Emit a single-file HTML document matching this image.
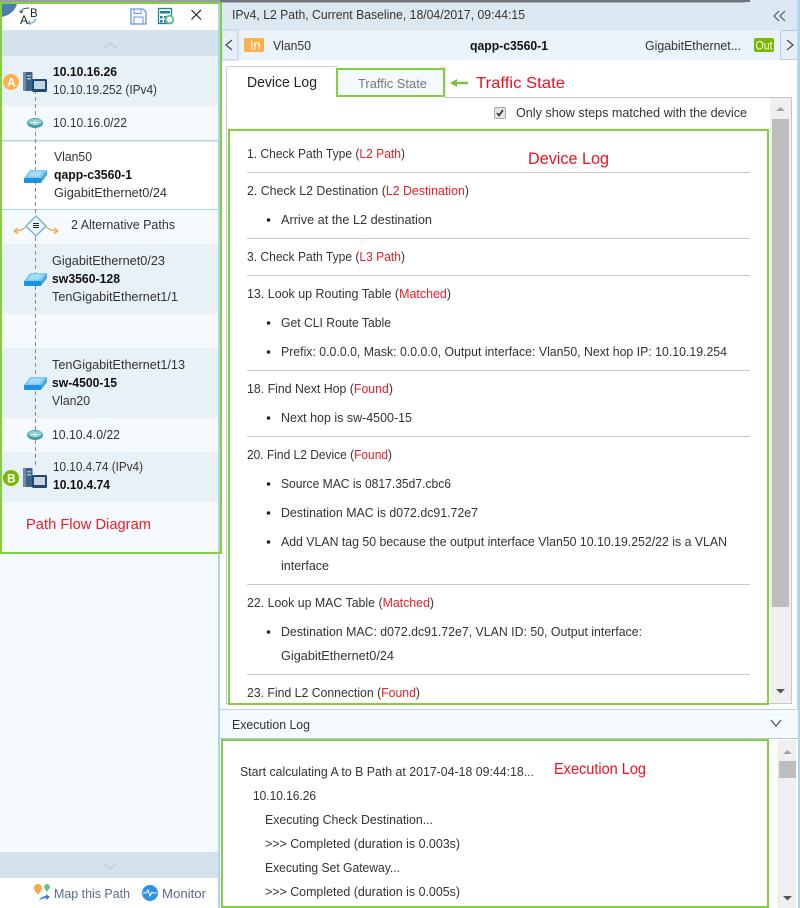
<!DOCTYPE html>
<html><head><meta charset="utf-8"><style>
html,body{margin:0;padding:0;background:#fff;width:800px;height:908px;overflow:hidden}
svg{display:block}
text{font-family:"Liberation Sans",sans-serif;font-size:13.3px;fill:#333}
.b{font-weight:bold;fill:#111}
.r{fill:#ee1c25}
.a{font-size:16px;fill:#f01020}
</style></head><body>
<svg width="800" height="908" viewBox="0 0 800 908" xmlns="http://www.w3.org/2000/svg">
<defs>
<g id="srv"><rect x="0" y="0" width="9.500" height="19" rx="1" fill="#3d6285"/><rect x="0" y="0" width="3" height="19" fill="#6d8cab"/><rect x="4" y="3" width="4" height="1.500" fill="#a6bccf"/><rect x="4" y="6" width="4" height="1.500" fill="#a6bccf"/><rect x="9" y="7" width="15" height="13" rx="1.500" fill="#1f4a72"/><rect x="11" y="9" width="11" height="8" fill="#c7d3dd"/></g>
<g id="sw"><path d="M6 0H23L17 8H0Z" fill="#86c9ef"/><path d="M7 1.500H19L15 6.500H4Z" fill="#a6dbf6"/><path d="M0 8H17V13H1Q0 13 0 12Z" fill="#1d92dc"/><path d="M17 8L23 0V5L17 13Z" fill="#42a8e4"/></g>
<g id="net"><ellipse cx="8" cy="5" rx="8" ry="5" fill="#3f9aa3"/><ellipse cx="8" cy="4" rx="7" ry="3.300" fill="#86cbcf"/><path d="M4 4.500H12M8 2.500V6.500" stroke="#fff" stroke-width="1"/></g>
</defs>

<!-- LEFT PANEL -->
<rect x="0" y="0" width="220" height="908" fill="#fff"/>
<rect x="2" y="30" width="216" height="26" fill="#d4e2ee"/>
<path d="M103 48l7-5 7 5" fill="none" stroke="#c4d3de" stroke-width="2"/>
<rect x="2" y="56" width="216" height="50" fill="#e9f1f8"/>
<rect x="2" y="106" width="216" height="34" fill="#f5fafe"/>
<rect x="2" y="140" width="216" height="1.500" fill="#add5ea"/>
<rect x="2" y="209" width="216" height="1.500" fill="#add5ea"/>
<rect x="2" y="210" width="216" height="34" fill="#f5fafe"/>
<rect x="2" y="244" width="216" height="70" fill="#e9f1f8"/>
<rect x="2" y="314" width="216" height="34" fill="#f5fafe"/>
<rect x="2" y="348" width="216" height="70" fill="#e9f1f8"/>
<rect x="2" y="418" width="216" height="34" fill="#f5fafe"/>
<rect x="2" y="452" width="216" height="50" fill="#e9f1f8"/>
<rect x="0" y="502" width="218" height="350" fill="#f5fafe"/>
<rect x="0" y="852" width="218" height="26" fill="#d4e2ee"/>
<path d="M103 863l7 6 7-6" fill="none" stroke="#c4d3de" stroke-width="2"/>
<rect x="218" y="0" width="2" height="908" fill="#add5ea"/>

<!-- dashed path -->
<line x1="35.500" y1="90" x2="35.500" y2="468" stroke="#888" stroke-width="1" stroke-dasharray="4 3"/>

<!-- top icons -->
<path d="M2 4H17Q14 14 2 17Z" fill="#4b7fae"/>
<text x="20" y="24" style="font-size:12px;fill:#222">A</text>
<text x="30" y="17" style="font-size:11.500px;fill:#222">B</text>
<path d="M21 13 Q21 8 29 8M21 13l-1.500-2.500M21 13l2-2" fill="none" stroke="#444" stroke-width=".9"/>
<path d="M28 23 Q34 24 36 19M28 23l2.500 1.500M28 23l2-2" fill="none" stroke="#2b84c8" stroke-width=".9"/>
<path d="M131 9h12l3 3v12h-15z" fill="#fff" stroke="#5f93f0" stroke-width="1.300"/>
<rect x="134" y="9" width="7" height="4.500" fill="none" stroke="#5f93f0"/>
<rect x="134" y="17" width="9" height="7" fill="none" stroke="#5f93f0"/>
<rect x="158.500" y="8.500" width="13" height="15" fill="#fff" stroke="#1d7fa6" stroke-width="1.300"/>
<rect x="160" y="11" width="10" height="2.500" fill="#1d7fa6"/>
<rect x="160" y="16" width="2.500" height="2.500" fill="#1d7fa6"/><rect x="164" y="16" width="2.500" height="2.500" fill="#1d7fa6"/>
<rect x="160" y="20" width="2.500" height="2.500" fill="#1d7fa6"/><rect x="164" y="20" width="2.500" height="2.500" fill="#1d7fa6"/>
<circle cx="169.500" cy="19.500" r="3.800" fill="#fff" stroke="#5cc08a" stroke-width="1.800"/>
<path d="M191.500 10l9.500 9.500M201 10l-9.500 9.500" stroke="#222" stroke-width="1.200"/>

<!-- nodes -->
<circle cx="11" cy="82" r="8" fill="#fbb04e"/><text x="7" y="86.500" style="font-size:12px;font-weight:bold;fill:#fff">A</text>
<use href="#srv" x="23" y="72"/>
<text x="53" y="76" class="b" textLength="64" lengthAdjust="spacingAndGlyphs">10.10.16.26</text>
<text x="53" y="94" textLength="104" lengthAdjust="spacingAndGlyphs">10.10.19.252 (IPv4)</text>
<use href="#net" x="27" y="118"/>
<text x="53" y="127" textLength="74" lengthAdjust="spacingAndGlyphs">10.10.16.0/22</text>
<use href="#sw" x="24" y="170"/>
<text x="54" y="161" textLength="38" lengthAdjust="spacingAndGlyphs">Vlan50</text>
<text x="54" y="179" class="b" textLength="78" lengthAdjust="spacingAndGlyphs">qapp-c3560-1</text>
<text x="54" y="197" textLength="113" lengthAdjust="spacingAndGlyphs">GigabitEthernet0/24</text>

<path d="M36 216l10 10-10 10-10-10z" fill="#eaf4fb" stroke="#7fb5d8" stroke-width="1.500"/>
<path d="M33 223.500h6M33 225.500h6M33 227.500h6" stroke="#222" stroke-width="1"/>
<path d="M14 231Q21 231 26 227M14 231l4-3M14 231l4 2.500M58 231Q51 231 46 227M58 231l-4-3M58 231l-4 2.500" fill="none" stroke="#f5a94a" stroke-width="1.400"/>
<text x="71" y="229" textLength="104" lengthAdjust="spacingAndGlyphs">2 Alternative Paths</text>

<use href="#sw" x="24" y="273"/>
<text x="52" y="265" textLength="113" lengthAdjust="spacingAndGlyphs">GigabitEthernet0/23</text>
<text x="52" y="283" class="b" textLength="68" lengthAdjust="spacingAndGlyphs">sw3560-128</text>
<text x="52" y="301" textLength="126" lengthAdjust="spacingAndGlyphs">TenGigabitEthernet1/1</text>

<use href="#sw" x="24" y="377"/>
<text x="52" y="369" textLength="133" lengthAdjust="spacingAndGlyphs">TenGigabitEthernet1/13</text>
<text x="52" y="387" class="b" textLength="65" lengthAdjust="spacingAndGlyphs">sw-4500-15</text>
<text x="52" y="405" textLength="38" lengthAdjust="spacingAndGlyphs">Vlan20</text>

<use href="#net" x="27" y="430"/>
<text x="52" y="439" textLength="68" lengthAdjust="spacingAndGlyphs">10.10.4.0/22</text>

<circle cx="11" cy="478" r="8" fill="#7ab800"/><text x="7" y="482.500" style="font-size:12px;font-weight:bold;fill:#fff">B</text>
<use href="#srv" x="23" y="468"/>
<text x="53" y="471" textLength="90" lengthAdjust="spacingAndGlyphs">10.10.4.74 (IPv4)</text>
<text x="53" y="489" class="b" textLength="57" lengthAdjust="spacingAndGlyphs">10.10.4.74</text>
<text x="26" y="529" class="r" style="font-size:14.500px" textLength="125" lengthAdjust="spacingAndGlyphs">Path Flow Diagram</text>

<!-- bottom links -->
<path d="M38 895c-3-4-4-5-4-7a4 4 0 0 1 8 0c0 2-1 3-4 7z" fill="#f5a94a"/>
<path d="M47 892c-2-3-3-4-3-5a3 3 0 0 1 6 0c0 1-1 2-3 5z" fill="#6cc27a"/>
<path d="M39 901q2-5 7-5v-2l4 3-4 3v-2q-4 0-7 3z" fill="#3d7ee0"/>
<text x="54" y="898" style="fill:#5a6a8a" textLength="76" lengthAdjust="spacingAndGlyphs">Map this Path</text>
<circle cx="150" cy="893" r="8" fill="#2c92e8"/>
<path d="M143 893h3l2-3 2 6 2-4 1 1h4" fill="none" stroke="#fff" stroke-width="1"/>
<text x="162" y="898" style="fill:#5a6a8a" textLength="44" lengthAdjust="spacingAndGlyphs">Monitor</text>

<!-- RIGHT PANEL -->
<rect x="222" y="0" width="576" height="30" fill="#dbe8f1"/>
<rect x="220" y="0" width="530" height="2" fill="#6d7378"/>
<rect x="220" y="2" width="525" height="1" fill="#a8b3bb"/>
<text x="232" y="19" textLength="293" lengthAdjust="spacingAndGlyphs">IPv4, L2 Path, Current Baseline, 18/04/2017, 09:44:15</text>
<path d="M779 11l-5 5 5 5M785 11l-5 5 5 5" fill="none" stroke="#555" stroke-width="1.200"/>

<rect x="222" y="30" width="576" height="30" fill="#eaf3fa"/>
<rect x="222" y="30" width="16" height="30" fill="#e6eff7" stroke="#b7cde4"/>
<path d="M232 40l-6 5 6 5" fill="none" stroke="#444" stroke-width="1.200"/>
<rect x="780.500" y="30.500" width="17" height="29" fill="#e6eff7" stroke="#b7cde4"/>
<path d="M787 40l6 5-6 5" fill="none" stroke="#444" stroke-width="1.200"/>
<rect x="244" y="38" width="20" height="14" rx="2" fill="#fbb04e"/>
<text x="250" y="49.500" style="font-size:12.500px;fill:#fff">In</text>
<text x="273" y="50" textLength="38" lengthAdjust="spacingAndGlyphs">Vlan50</text>
<text x="470" y="50" class="b" textLength="78" lengthAdjust="spacingAndGlyphs">qapp-c3560-1</text>
<text x="645" y="50" textLength="96" lengthAdjust="spacingAndGlyphs">GigabitEthernet...</text>
<rect x="754" y="38" width="20" height="14" rx="2" fill="#7ab800"/>
<text x="755.500" y="49.500" style="font-size:12px;fill:#fff" textLength="17" lengthAdjust="spacingAndGlyphs">Out</text>

<!-- tabs -->
<path d="M226.500 97V69q0-2.500 2.500-2.500H337" fill="none" stroke="#ccc"/>
<path d="M440 67h5v30" fill="none" stroke="#ccc"/>
<rect x="337" y="69" width="107" height="27" fill="#f5fafe" stroke="#83cf3f" stroke-width="2"/>
<text x="247" y="87" style="font-size:14.500px;fill:#222" textLength="70" lengthAdjust="spacingAndGlyphs">Device Log</text>
<text x="358" y="88" style="fill:#777" textLength="69" lengthAdjust="spacingAndGlyphs">Traffic State</text>
<path d="M453 83h15" stroke="#7ac143" stroke-width="2.500"/><path d="M450 83l7-4v8z" fill="#7ac143"/>
<text x="476" y="88" class="a" textLength="89" lengthAdjust="spacingAndGlyphs">Traffic State</text>

<!-- content box -->
<path d="M445 97.500H791.500V703.500H226.500V97" fill="none" stroke="#c8c8c8"/>
<rect x="770" y="98" width="21" height="605" fill="#efefef"/>
<rect x="772" y="119" width="17" height="488" fill="#bdbdbd"/>
<path d="M776 111l4.500-4 4.500 4z" fill="#a5a5a5"/>
<path d="M776 689h9l-4.500 4.500z" fill="#555"/>
<rect x="494.500" y="107.500" width="11" height="11" rx="1.500" fill="#e4e4e4" stroke="#a8a8a8"/>
<path d="M497 113l2 2.500 4-5.500" fill="none" stroke="#333" stroke-width="1.700"/>
<text x="516" y="117" textLength="231" lengthAdjust="spacingAndGlyphs">Only show steps matched with the device</text>

<rect x="229" y="130" width="539" height="574" fill="none" stroke="#83cf3f" stroke-width="2"/>
<text x="528" y="164" class="a" style="font-size:16.500px" textLength="81" lengthAdjust="spacingAndGlyphs">Device Log</text>

<g fill="#c8c8c8">
<rect x="247" y="172" width="503" height="1"/><rect x="247" y="238" width="503" height="1"/>
<rect x="247" y="275" width="503" height="1"/><rect x="247" y="370" width="503" height="1"/>
<rect x="247" y="436" width="503" height="1"/><rect x="247" y="584" width="503" height="1"/>
<rect x="247" y="674" width="503" height="1"/>
</g>
<g fill="#222">
<circle cx="268.500" cy="220" r="1.800"/><circle cx="268.500" cy="323" r="1.800"/><circle cx="268.500" cy="352" r="1.800"/>
<circle cx="268.500" cy="418" r="1.800"/><circle cx="268.500" cy="484" r="1.800"/><circle cx="268.500" cy="513" r="1.800"/>
<circle cx="268.500" cy="542" r="1.800"/><circle cx="268.500" cy="632" r="1.800"/>
</g>

<text x="247" y="158" textLength="158" lengthAdjust="spacingAndGlyphs">1. Check Path Type (<tspan class="r">L2 Path</tspan>)</text>
<text x="247" y="195" textLength="222" lengthAdjust="spacingAndGlyphs">2. Check L2 Destination (<tspan class="r">L2 Destination</tspan>)</text>
<text x="281" y="224" textLength="151" lengthAdjust="spacingAndGlyphs">Arrive at the L2 destination</text>
<text x="247" y="261" textLength="158" lengthAdjust="spacingAndGlyphs">3. Check Path Type (<tspan class="r">L3 Path</tspan>)</text>
<text x="247" y="298" textLength="204" lengthAdjust="spacingAndGlyphs">13. Look up Routing Table (<tspan class="r">Matched</tspan>)</text>
<text x="281" y="327" textLength="110" lengthAdjust="spacingAndGlyphs">Get CLI Route Table</text>
<text x="281" y="356" textLength="446" lengthAdjust="spacingAndGlyphs">Prefix: 0.0.0.0, Mask: 0.0.0.0, Output interface: Vlan50, Next hop IP: 10.10.19.254</text>
<text x="247" y="393" textLength="146" lengthAdjust="spacingAndGlyphs">18. Find Next Hop (<tspan class="r">Found</tspan>)</text>
<text x="281" y="422" textLength="131" lengthAdjust="spacingAndGlyphs">Next hop is sw-4500-15</text>
<text x="247" y="459" textLength="145" lengthAdjust="spacingAndGlyphs">20. Find L2 Device (<tspan class="r">Found</tspan>)</text>
<text x="281" y="488" textLength="170" lengthAdjust="spacingAndGlyphs">Source MAC is 0817.35d7.cbc6</text>
<text x="281" y="517" textLength="197" lengthAdjust="spacingAndGlyphs">Destination MAC is d072.dc91.72e7</text>
<text x="281" y="546" textLength="446" lengthAdjust="spacingAndGlyphs">Add VLAN tag 50 because the output interface Vlan50 10.10.19.252/22 is a VLAN</text>
<text x="281" y="570" textLength="48" lengthAdjust="spacingAndGlyphs">interface</text>
<text x="247" y="607" textLength="187" lengthAdjust="spacingAndGlyphs">22. Look up MAC Table (<tspan class="r">Matched</tspan>)</text>
<text x="281" y="636" textLength="361" lengthAdjust="spacingAndGlyphs">Destination MAC: d072.dc91.72e7, VLAN ID: 50, Output interface:</text>
<text x="281" y="660" textLength="113" lengthAdjust="spacingAndGlyphs">GigabitEthernet0/24</text>
<text x="247" y="697" textLength="173" lengthAdjust="spacingAndGlyphs">23. Find L2 Connection (<tspan class="r">Found</tspan>)</text>

<!-- execution log -->
<rect x="220" y="709" width="578" height="29" fill="#f5fafe"/>
<rect x="220" y="709" width="578" height="1" fill="#c3d3da"/>
<rect x="220" y="738" width="578" height="1" fill="#b8cbd6"/>
<text x="232" y="729" textLength="78" lengthAdjust="spacingAndGlyphs">Execution Log</text>
<path d="M771 720l5 6 5-6" fill="none" stroke="#444" stroke-width="1.100"/>
<rect x="222" y="740" width="546" height="167" fill="none" stroke="#83cf3f" stroke-width="2"/>
<rect x="777" y="740" width="19" height="168" fill="#efefef"/>
<rect x="779" y="761" width="17" height="17" fill="#bdbdbd"/>
<path d="M783 754l4.500-4 4.500 4z" fill="#a5a5a5"/>
<path d="M783 896h9l-4.500 4.500z" fill="#555"/>
<rect x="798" y="0" width="2" height="908" fill="#a9d6ef"/>
<rect x="797" y="0" width="1" height="709" fill="#c8dbe8"/>

<text x="240" y="776" textLength="294" lengthAdjust="spacingAndGlyphs">Start calculating A to B Path at 2017-04-18 09:44:18...</text>
<text x="253" y="800" textLength="63" lengthAdjust="spacingAndGlyphs">10.10.16.26</text>
<text x="265" y="824" textLength="168" lengthAdjust="spacingAndGlyphs">Executing Check Destination...</text>
<text x="265" y="848" textLength="195" lengthAdjust="spacingAndGlyphs">&gt;&gt;&gt; Completed (duration is 0.003s)</text>
<text x="265" y="872" textLength="135" lengthAdjust="spacingAndGlyphs">Executing Set Gateway...</text>
<text x="265" y="896" textLength="195" lengthAdjust="spacingAndGlyphs">&gt;&gt;&gt; Completed (duration is 0.005s)</text>
<text x="554" y="774" class="a" textLength="92" lengthAdjust="spacingAndGlyphs">Execution Log</text>

<!-- left green box -->
<rect x="1" y="3" width="220" height="550" fill="none" stroke="#83cf3f" stroke-width="2"/>
<rect x="0" y="0" width="220" height="2" fill="#9aa0a0"/>
</svg>
</body></html>
